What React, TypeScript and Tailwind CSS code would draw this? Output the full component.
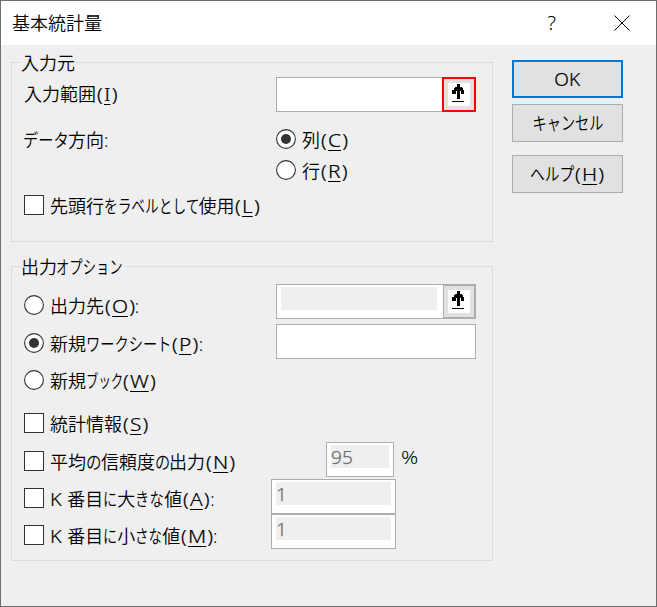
import { useState } from 'react';
import type { ReactNode } from 'react';

const Key = ({ children }: { children: string }) => (
  <span className="mr-1 ml-px inline-block origin-left scale-x-[1.16] [-webkit-text-stroke:0.2px]">
    (<span className="mx-px underline decoration-1 underline-offset-[3px]">{children}</span>)
  </span>
);

// Condensed kana: the scale and the negative margin come with each label
const Kana = ({ className, children }: { className: string; children: string }) => (
  <span className={`inline-block origin-left ${className}`}>{children}</span>
);

interface ChoiceProps {
  type: 'radio' | 'checkbox';
  checked: boolean;
  onClick: () => void;
  className?: string;
  children: ReactNode;
}

const Choice = ({ type, checked, onClick, className = '', children }: ChoiceProps) => (
  <button
    type="button"
    role={type}
    aria-checked={checked}
    onClick={onClick}
    className={`flex h-5 items-start whitespace-nowrap ${className}`}
  >
    <svg width="20" height="20" viewBox="0 0 20 20" className="mr-1.5 shrink-0">
      {type === 'radio' ? (
        <>
          <circle cx="10" cy="10" r="9.4" fill="#fff" stroke="#333" strokeWidth="1.1" />
          {checked && <circle cx="10" cy="10" r="5" fill="#333" />}
        </>
      ) : (
        <>
          <rect x="0.5" y="0.5" width="19" height="19" fill="#fff" stroke="#333" />
          {checked && <path d="M4 10l4 4 8-9" fill="none" stroke="#333" strokeWidth="2" />}
        </>
      )}
    </svg>
    <span className="mt-px leading-5">{children}</span>
  </button>
);

const PickIcon = () => (
  <svg width="22" height="23" viewBox="0 0 22 23" shapeRendering="crispEdges" className="bg-white">
    <path d="M9 1h3v3h2v1h1v2h1v4h-3V8h-1v8H9V8H8v3H4V7h2V5h1V4h2z" />
    <path d="M4 18h12v1H4z" />
  </svg>
);

interface FieldProps {
  value?: string;
  disabled?: boolean;
  className: string;
}

const Field = ({ value = '', disabled, className }: FieldProps) => (
  <div className={`h-[35px] border border-[#abadb3] bg-white pt-0.5 pr-1 pl-1 ${className}`}>
    <div className={`h-[23px] leading-[25px] text-[#6d6d6d] [-webkit-text-stroke:0.25px] ${disabled ? 'bg-[#efefef]' : ''}`}>
      <span className="inline-block origin-left scale-x-[1.06]">{value}</span>
    </div>
  </div>
);

const App = () => {
  const [direction, setDirection] = useState('column');
  const [target, setTarget] = useState('sheet');
  const [checks, setChecks] = useState<string[]>([]);

  const toggle = (id: string) => {
    setChecks((prev) => (prev.includes(id) ? prev.filter((c) => c !== id) : [...prev, id]));
  };

  return (
    <div className="h-[607px] w-[657px] border border-[#6e6c6d] bg-[#efefef] font-['Noto_Sans','Noto_Sans_CJK_JP',sans-serif] text-[18px] font-[350] text-black">
      <header className="flex h-11 items-center bg-white pl-[11px]">
        <h1 className="grow leading-6">基本統計量</h1>
        <span className="mr-[58px] text-[20px]">?</span>
        <svg width="16" height="16" viewBox="0 0 16 16" className="mr-[26px]">
          <path d="M0.5 0.5l15 15M15.5 0.5l-15 15" stroke="#000" strokeWidth="1" />
        </svg>
      </header>

      <div className="flex pl-2.5">
        <main className="w-[482px] shrink-0 pt-[17px]">
          <section className="h-[180px] border border-[#dcdcdc] pr-4 pl-3">
            <h2 className="-mt-2.5 -ml-[3px] h-5 w-[55px] bg-[#efefef] leading-5">入力元</h2>
            <div className="mt-1 flex h-[35px]">
              <div className="w-[252px] pt-[7px] leading-5">
                入力範囲<Key>I</Key>
              </div>
              <Field className="w-[166px] border-r-0" />
              <button type="button" className="flex h-[35px] w-[34px] items-start border-2 border-[#f00] bg-[#e1e1e1] pt-1 pl-1">
                <PickIcon />
              </button>
            </div>
            <div className="mt-[17px] flex">
              <div className="w-[252px] pt-px leading-5">
                <Kana className="-mr-[9px] -ml-px scale-x-[.85]">データ</Kana>方向:
              </div>
              <div>
                <Choice type="radio" checked={direction === 'column'} onClick={() => setDirection('column')}>
                  列<Key>C</Key>
                </Choice>
                <Choice type="radio" checked={direction === 'row'} onClick={() => setDirection('row')} className="mt-[11px]">
                  行<Key>R</Key>
                </Choice>
              </div>
            </div>
            <Choice type="checkbox" checked={checks.includes('label')} onClick={() => toggle('label')} className="mt-[15px]">
              先頭行<Kana className="-mr-[31px] scale-x-[.76]">をラベルとして</Kana>使用<Key>L</Key>
            </Choice>
          </section>

          <section className="mt-6 h-[295px] border border-[#dcdcdc] pr-4 pl-3">
            <h2 className="-mt-2.5 -ml-[3px] h-5 w-[103px] bg-[#efefef] leading-5 whitespace-nowrap">
              出力<Kana className="-mr-[25px] -ml-px scale-x-[.74]">オプション</Kana>
            </h2>
            <div className="flex">
              <div className="w-[252px] pt-[18px]">
                <Choice type="radio" checked={target === 'range'} onClick={() => setTarget('range')}>
                  出力先<Key>O</Key>:
                </Choice>
                <Choice type="radio" checked={target === 'sheet'} onClick={() => setTarget('sheet')} className="mt-[18px]">
                  新規<Kana className="-mr-[23px] scale-x-[.79]">ワークシート</Kana><Key>P</Key>:
                </Choice>
                <Choice type="radio" checked={target === 'book'} onClick={() => setTarget('book')} className="mt-[17px]">
                  新規<Kana className="-mr-[18px] scale-x-[.69]">ブック</Kana><Key>W</Key>
                </Choice>
              </div>
              <div className="pt-[7px]">
                <div className="flex">
                  <Field disabled className="w-[167px] border-r-0 pr-1.5" />
                  <button type="button" className="flex h-[35px] w-[33px] items-start border-2 border-l border-[#abadb3] bg-[#e1e1e1] pt-1 pl-1">
                    <PickIcon />
                  </button>
                </div>
                <Field className="mt-[5px] w-[200px]" />
              </div>
            </div>
            <div className="mt-[23px] flex">
              <div className="w-[247px]">
                <Choice type="checkbox" checked={checks.includes('stats')} onClick={() => toggle('stats')}>
                  統計情報<Key>S</Key>
                </Choice>
                <Choice type="checkbox" checked={checks.includes('mean')} onClick={() => toggle('mean')} className="mt-[18px]">
                  平均<Kana className="-mr-[3px] scale-x-[.86]">の</Kana>信頼度<Kana className="-mr-[4px] scale-x-[.84]">の</Kana>出力<Key>N</Key>
                </Choice>
                <Choice type="checkbox" checked={checks.includes('large')} onClick={() => toggle('large')} className="mt-[17px]">
                  <span className="mr-0.5 inline-block origin-left scale-x-[1.1] [-webkit-text-stroke:0.2px]">K</span> 番目<Kana className="-mr-[4px] scale-x-[.78]">に</Kana>大<Kana className="-mr-[7px] scale-x-[.8]">きな</Kana>値<Key>A</Key>:
                </Choice>
                <Choice type="checkbox" checked={checks.includes('small')} onClick={() => toggle('small')} className="mt-[17px]">
                  <span className="mr-0.5 inline-block origin-left scale-x-[1.1] [-webkit-text-stroke:0.2px]">K</span> 番目<Kana className="-mr-[4px] scale-x-[.78]">に</Kana>小<Kana className="-mr-[9px] scale-x-[.75]">さな</Kana>値<Key>M</Key>:
                </Choice>
              </div>
              <div className="pt-[29px]">
                <div className="flex">
                  <Field disabled value="95" className="ml-[55px] w-[68px]" />
                  <span className="ml-[7px] inline-block origin-left scale-x-[1.18] pt-[3px] leading-6">%</span>
                </div>
                <Field disabled value="1" className="mt-0.5 w-[125px]" />
                <Field disabled value="1" className="w-[125px]" />
              </div>
            </div>
          </section>
        </main>

        <aside className="ml-[19px] flex w-[111px] flex-col pt-[15px]">
          <button type="button" className="h-[38px] border-2 border-[#0078d7] bg-[#e1e1e1]">
            <span className="inline-block scale-x-[1.06] [-webkit-text-stroke:0.2px]">OK</span>
          </button>
          <button type="button" className="mt-1.5 h-[38px] border border-[#adadad] bg-[#e1e1e1]">
            <span className="inline-block scale-x-[.79]">キャンセル</span>
          </button>
          <button type="button" className="mt-[13px] h-[38px] border border-[#adadad] bg-[#e1e1e1]">
            <Kana className="-mr-[10px] scale-x-[.82]">ヘルプ</Kana><Key>H</Key>
          </button>
        </aside>
      </div>
    </div>
  );
};

export default App;
